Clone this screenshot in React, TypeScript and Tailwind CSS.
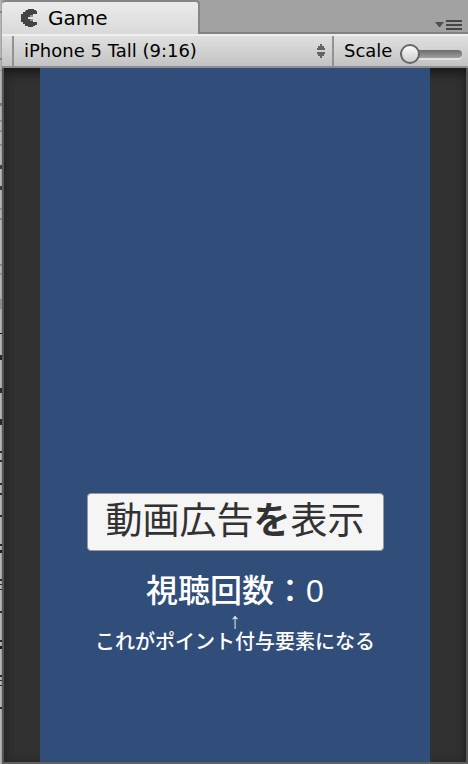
import React from "react";

const marks: [number, number, string][] = [
  [11, 2, "#858585"],
  [58, 2, "#858585"],
  [70, 1, "#909090"],
  [103, 3, "#747b88"],
  [120, 2, "#8b8b8b"],
  [130, 2, "#8b8b8b"],
  [144, 2, "#8b8b8b"],
  [165, 4, "#3a3f42"],
  [186, 4, "#3c3c3c"],
  [208, 2, "#909090"],
  [218, 2, "#858585"],
  [264, 2, "#858585"],
  [273, 2, "#909090"],
  [299, 10, "#968a7c"],
  [333, 1, "#101010"],
  [355, 5, "#2a2a2a"],
  [388, 5, "#2a2a2a"],
  [419, 6, "#2a2a2a"],
  [451, 2, "#2a2a2a"],
  [460, 2, "#2a2a2a"],
  [483, 2, "#2a2a2a"],
  [493, 2, "#2a2a2a"],
  [515, 2, "#2a2a2a"],
  [544, 2, "#2a2a2a"],
  [550, 3, "#1a1a1a"],
  [579, 2, "#2a2a2a"],
  [584, 1, "#2a2a2a"],
  [589, 1, "#2a2a2a"],
  [611, 2, "#2a2a2a"],
  [640, 2, "#2a2a2a"],
  [646, 3, "#1a1a1a"],
  [675, 2, "#2a2a2a"],
  [680, 1, "#2a2a2a"],
  [685, 1, "#2a2a2a"],
  [707, 2, "#2a2a2a"],
];

function NeighbourEdge() {
  return (
    <svg
      className="h-[764px] w-[2px] shrink-0"
      viewBox="0 0 2 764"
      preserveAspectRatio="none"
      shapeRendering="crispEdges"
      aria-hidden="true"
    >
      <rect width="2" height="764" fill="#b4b6b5" />
      <rect x="1" width="1" height="764" fill="#a2a3a2" />
      {marks.map(([y, h, fill]) => (
        <rect key={y} y={y} width="2" height={h} fill={fill} />
      ))}
    </svg>
  );
}

function GameIcon() {
  return (
    <svg className="h-[18px] w-[16px]" viewBox="0 0 16 18" aria-hidden="true">
      <path
        d="M5 1H7V0H13V1H15V2H16V5H12V6H9V8H7V10H9V12H12V13H16V16H14V17H12V18H7V17H4V15H2V13H0V5H2V3H4Z"
        fill="#444444"
      />
      <path d="M9 6H12V8H9ZM9 10H12V12H9Z" fill="#444444" opacity="0.5" />
    </svg>
  );
}

function PanelMenuIcon() {
  return (
    <svg
      className="h-[12px] w-[28px]"
      viewBox="0 0 28 12"
      aria-hidden="true"
    >
      <path d="M1 2H10L6 7H5Z" fill="#505050" />
      <path d="M12 0H28V2H12ZM12 4H28V6H12ZM12 8H28V10H12Z" fill="#464646" />
    </svg>
  );
}

function TabBar() {
  return (
    <header className="flex h-[34px] items-stretch justify-between border-b-2 border-[#828282] bg-[#a2a2a2]">
      <button
        type="button"
        className="-mb-[2px] flex w-[198px] items-center gap-[11px] rounded-t border-t-2 border-r-2 border-[#868686] bg-linear-to-b from-[#ebebeb] to-[#d9d9d9] pl-[19px] text-[20px] leading-6 text-black"
      >
        <GameIcon />
        Game
      </button>
      <button type="button" aria-label="Panel menu" className="mr-[6px] self-end">
        <PanelMenuIcon />
      </button>
    </header>
  );
}

function Toolbar() {
  return (
    <div className="flex h-[34px] items-stretch border-t-2 border-b-2 border-t-[#eeeeee] border-b-[#8e8e8e] bg-linear-to-b from-[#e0e0e0] to-[#c3c3c3] text-[18px] leading-6 text-black">
      <div className="relative ml-[10px] flex flex-1 border-x-2 border-[#929292]">
        <select
          aria-label="Aspect ratio"
          className="w-full appearance-none bg-transparent pl-[10px] outline-none"
          defaultValue="tall"
        >
          <option value="tall">iPhone 5 Tall (9:16)</option>
        </select>
        <svg
          className="pointer-events-none absolute top-[8px] right-[6px] h-[14px] w-[10px]"
          viewBox="0 0 10 14"
          aria-hidden="true"
        >
          <path
            d="M4 0H6V2H8V4H9V6H1V4H2V2H4ZM1 8H9V10H8V12H6V14H4V12H2V10H1Z"
            fill="#505050"
            opacity="0.85"
          />
        </svg>
      </div>
      <label className="flex w-[134px] items-center gap-2 pr-[6px] pl-[10px]">
        Scale
        <input
          type="range"
          min="1"
          max="5"
          defaultValue="1"
          className="mt-[6px] h-5 min-w-0 flex-1 appearance-none bg-transparent [&::-webkit-slider-runnable-track]:h-2 [&::-webkit-slider-runnable-track]:rounded-full [&::-webkit-slider-runnable-track]:bg-linear-to-b [&::-webkit-slider-runnable-track]:from-[#6c6c6c] [&::-webkit-slider-runnable-track]:to-[#a0a0a0] [&::-webkit-slider-runnable-track]:shadow-[0_2px_0_#e2e2e2] [&::-webkit-slider-thumb]:-mt-[6px] [&::-webkit-slider-thumb]:size-5 [&::-webkit-slider-thumb]:appearance-none [&::-webkit-slider-thumb]:rounded-full [&::-webkit-slider-thumb]:border-2 [&::-webkit-slider-thumb]:border-[#666666] [&::-webkit-slider-thumb]:bg-linear-to-b [&::-webkit-slider-thumb]:from-[#fafafa] [&::-webkit-slider-thumb]:to-[#cfcfcf]"
        />
      </label>
    </div>
  );
}

function GameView() {
  return (
    <main className="flex flex-1 border-x-2 border-b-2 border-l-[#545756] border-r-[#5a5a5a] border-b-[#606060] bg-[#313131] px-9 shadow-[inset_0_8px_12px_-4px_#161616,inset_0_0_8px_#282828]">
      <section className="flex flex-1 flex-col items-center justify-end bg-[#314d79] pb-[109px] font-['Liberation_Sans','Noto_Sans_CJK_JP',sans-serif] font-medium text-white">
        <button
          type="button"
          className="mb-5 h-[58px] w-[297px] rounded border border-[#9a9a9a] bg-[#f5f5f5] text-[37px] leading-[54px] font-normal whitespace-nowrap text-[#323232]"
        >
          動画広告<span className="font-bold">を</span>表示
        </button>
        <p className="text-[32px] leading-10">視聴回数：0</p>
        <p className="text-[22px] leading-5 text-[#dfe4ec]">↑</p>
        <p className="text-[20px] leading-[22px] whitespace-nowrap">
          これがポイント付与要素になる
        </p>
      </section>
    </main>
  );
}

export default function App() {
  return (
    <div className="flex min-h-screen bg-[#a2a2a2] font-['DejaVu_Sans',sans-serif]">
      <NeighbourEdge />
      <div className="flex min-w-0 flex-1 flex-col">
        <TabBar />
        <Toolbar />
        <GameView />
      </div>
    </div>
  );
}
